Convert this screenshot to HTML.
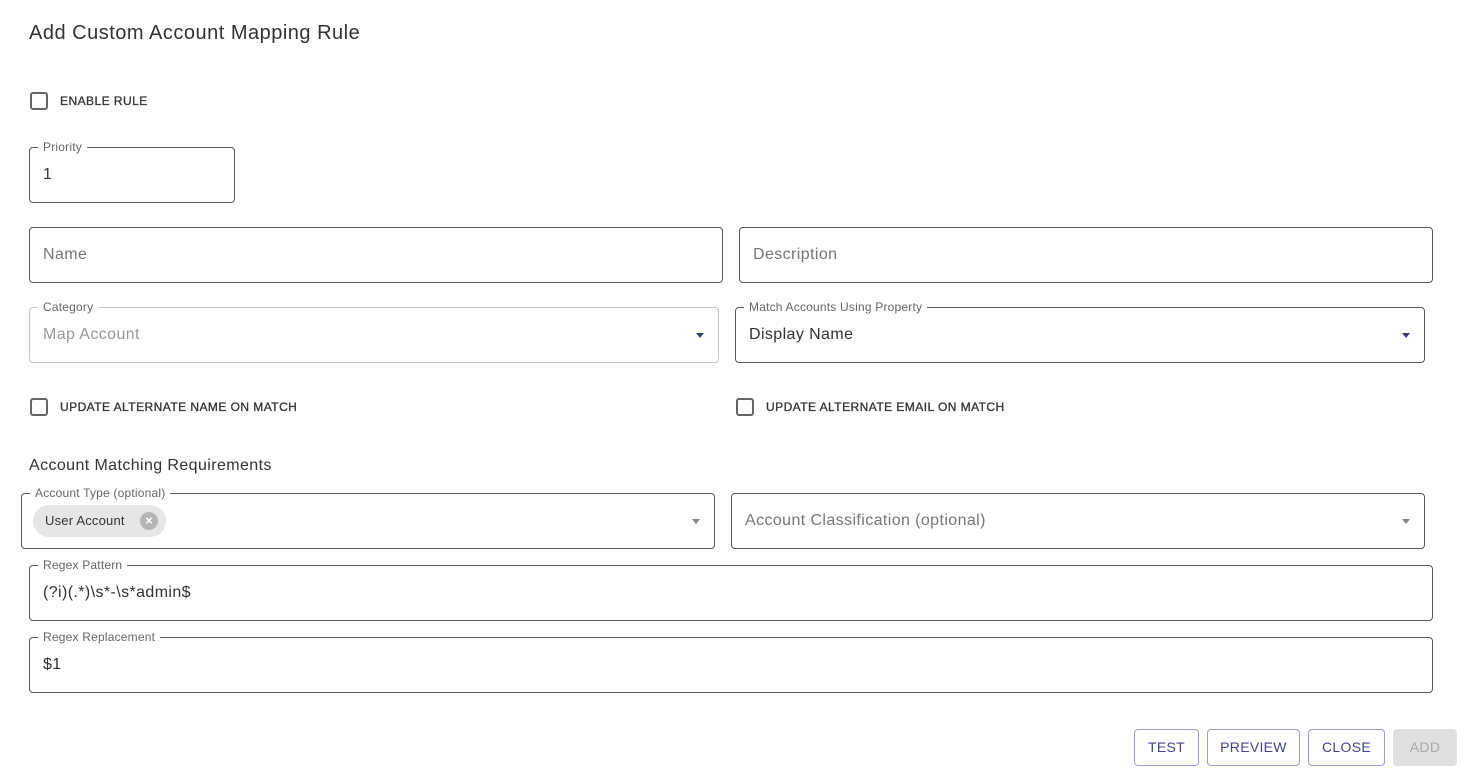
<!DOCTYPE html>
<html><head><style>
*{box-sizing:border-box;margin:0;padding:0}
body{width:1478px;height:783px;background:#fff;font-family:"Liberation Sans",sans-serif;color:#333;position:relative;overflow:hidden}
.a{position:absolute}
.f{position:absolute;border:1px solid #5a5a5a;border-radius:4px;height:56px}
.f.lt{border-color:#c4c4c4}
.lab{position:absolute;top:-9px;left:8px;background:#fff;padding:0 5px;font-size:12px;color:#666;line-height:16px;white-space:nowrap;letter-spacing:.2px}
.val{position:absolute;left:13px;top:18px;font-size:16px;line-height:18px;color:#333;letter-spacing:.4px}
.ph{color:#777}
.dis{color:#999}
.cb{position:absolute;width:18px;height:18px;border:2px solid #666;border-radius:3px}
.cbl{position:absolute;font-size:12px;letter-spacing:.45px;color:#333;font-weight:normal;-webkit-text-stroke:.3px #333}
.arr{position:absolute;right:14px;top:25px;width:0;height:0;border-left:4px solid transparent;border-right:4px solid transparent;border-top:5px solid #3c3a7a}
.arr.g{border-top-color:#888}
.btn{position:absolute;top:729px;height:37px;border:1px solid #9d9ccb;border-radius:4px;color:#45448a;font-size:14px;text-align:center;line-height:35px;letter-spacing:.3px}
</style></head><body>
<div class="a" style="left:29px;top:21px;font-size:20px;line-height:24px;color:#333;letter-spacing:.5px">Add Custom Account Mapping Rule</div>

<div class="cb" style="left:30px;top:92px"></div>
<div class="cbl" style="left:60px;top:94px">ENABLE RULE</div>

<div class="f" style="left:29px;top:147px;width:206px"><span class="lab">Priority</span><span class="val">1</span></div>

<div class="f" style="left:29px;top:227px;width:694px"><span class="val ph">Name</span></div>
<div class="f" style="left:739px;top:227px;width:694px"><span class="val ph">Description</span></div>

<div class="f lt" style="left:29px;top:307px;width:690px"><span class="lab">Category</span><span class="val dis">Map Account</span><span class="arr"></span></div>
<div class="f" style="left:735px;top:307px;width:690px"><span class="lab">Match Accounts Using Property</span><span class="val">Display Name</span><span class="arr"></span></div>

<div class="cb" style="left:30px;top:398px"></div>
<div class="cbl" style="left:60px;top:400px">UPDATE ALTERNATE NAME ON MATCH</div>
<div class="cb" style="left:736px;top:398px"></div>
<div class="cbl" style="left:766px;top:400px">UPDATE ALTERNATE EMAIL ON MATCH</div>

<div class="a" style="left:29px;top:456px;font-size:16px;line-height:20px;letter-spacing:.4px">Account Matching Requirements</div>

<div class="f" style="left:21px;top:493px;width:694px"><span class="lab">Account Type (optional)</span>
<div class="a" style="left:11px;top:11px;width:133px;height:32px;border-radius:16px;background:#e6e6e6;font-size:13px;line-height:32px;padding-left:12px;letter-spacing:.2px">User Account
<span class="a" style="left:107px;top:7px;width:18px;height:18px;border-radius:50%;background:#b5b5b5;color:#fff;font-size:13px;line-height:18px;text-align:center;font-weight:bold">×</span></div>
<span class="arr g"></span></div>
<div class="f" style="left:731px;top:493px;width:694px"><span class="val ph">Account Classification (optional)</span><span class="arr g"></span></div>

<div class="f" style="left:29px;top:565px;width:1404px"><span class="lab">Regex Pattern</span><span class="val">(?i)(.*)\s*-\s*admin$</span></div>
<div class="f" style="left:29px;top:637px;width:1404px"><span class="lab">Regex Replacement</span><span class="val">$1</span></div>

<div class="btn" style="left:1134px;width:65px">TEST</div>
<div class="btn" style="left:1207px;width:93px">PREVIEW</div>
<div class="btn" style="left:1308px;width:77px">CLOSE</div>
<div class="btn" style="left:1393px;width:64px;border:none;background:#e0e0e0;color:#aaa;line-height:37px">ADD</div>
</body></html>
